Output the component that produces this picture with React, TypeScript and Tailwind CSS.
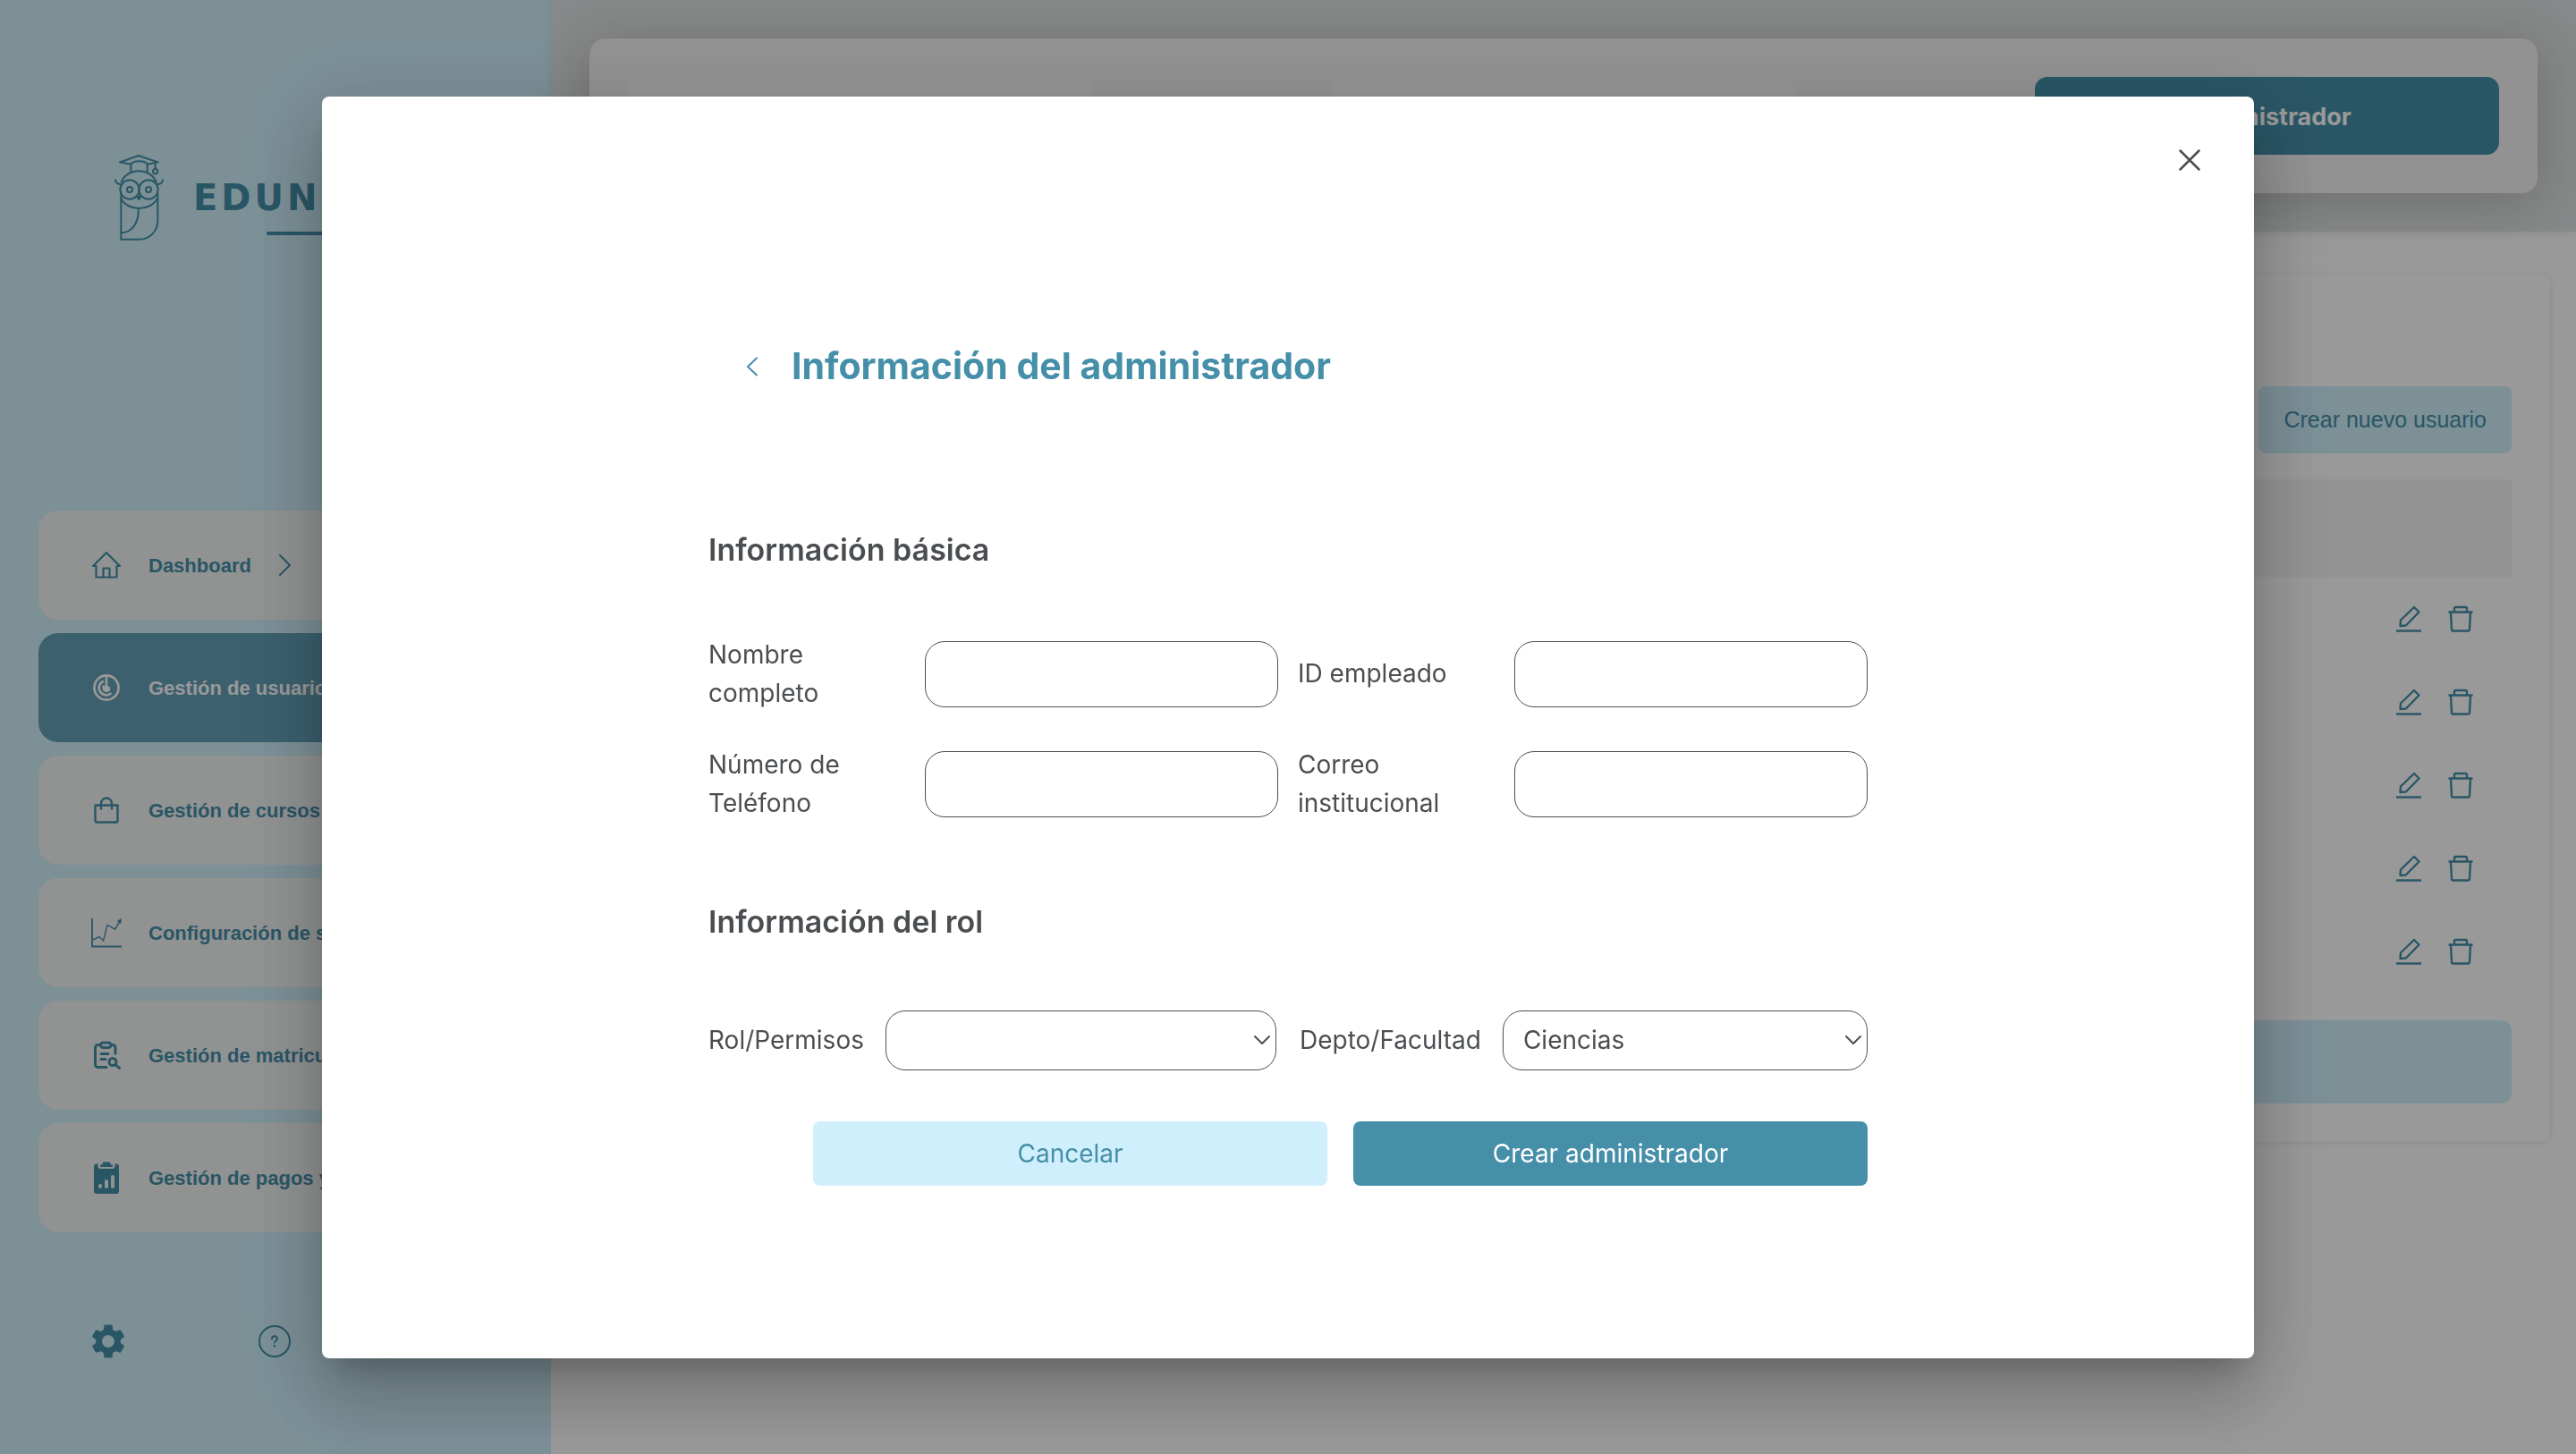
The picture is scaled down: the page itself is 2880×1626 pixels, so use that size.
import type { ReactNode } from "react";
import { MdSettings } from "react-icons/md";

function HomeIcon() {
  return (
    <svg viewBox="0 0 34 34" className="size-[34px]" fill="none" stroke="currentColor" strokeWidth="2.200" strokeLinejoin="round" strokeLinecap="round">
      <path d="M5.500 18H2L17 3l15 15h-3.500v12.500h-23z" />
      <path d="M13.500 30.500v-10H20.500v10" />
    </svg>
  );
}

function UsersIcon() {
  return (
    <svg viewBox="0 0 34 34" className="size-[34px]" fill="none" stroke="currentColor" strokeWidth="2.600" strokeLinecap="round">
      <circle cx="17" cy="17" r="13.600" />
      <path d="M17 4v14" />
      <path d="M13 10.200a8 8 0 1 0 8.500 13.500" />
      <path d="M14 15.500a3.500 3.500 0 0 0 3 5.200c2 0 3-1.500 3-3" />
      <circle cx="17.300" cy="18" r="1.800" fill="currentColor" />
    </svg>
  );
}

function BagIcon() {
  return (
    <svg viewBox="0 0 34 34" className="size-[34px]" fill="none" stroke="currentColor" strokeWidth="2.400" strokeLinejoin="round" strokeLinecap="round">
      <path d="M4.500 11.500h25v17a2 2 0 0 1-2 2h-21a2 2 0 0 1-2-2z" />
      <path d="M11 15.500V9.500a6 6 0 0 1 12 0v6" />
    </svg>
  );
}

function ChartIcon() {
  return (
    <svg viewBox="0 0 34 34" className="size-[34px]" fill="none" stroke="currentColor" strokeWidth="1.800">
      <path d="M1 1v31.500h33" />
      <path strokeWidth="1.400" d="M2 25l7-3.500 4.500 4.500L18 8.500l8.500 4.500L32 4.500" />
      <path d="M33.500 1.500l-.5 5-3.800-2.500z" fill="currentColor" strokeWidth="0.600" />
    </svg>
  );
}

function ClipboardSearchIcon() {
  return (
    <svg viewBox="0 0 34 34" className="size-[34px]" fill="none" stroke="currentColor" strokeWidth="3" strokeLinecap="round" strokeLinejoin="round">
      <path d="M10.500 5.500H7.500a3 3 0 0 0-3 3v19a3 3 0 0 0 3 3H17" />
      <path d="M22.500 5.500h1.500a3 3 0 0 1 3 3V15" />
      <rect x="10.500" y="3" width="11.500" height="5.500" rx="2.700" />
      <path d="M11 15.500h8M11 21.500h5" />
      <circle cx="24" cy="24.500" r="4" />
      <path d="M27 27.500l4.500 4" />
    </svg>
  );
}

function ClipboardStatsIcon() {
  return (
    <svg viewBox="0 0 34 38" className="h-[38px] w-[34px]" fill="currentColor">
      <path d="M5 3.500h2.500V6a3 3 0 0 0 3 3h13a3 3 0 0 0 3-3V3.500H28a3 3 0 0 1 3 3V34a3 3 0 0 1-3 3H6a3 3 0 0 1-3-3V6.500a3 3 0 0 1 3-3z" />
      <path d="M10 4.500h2.500V3a1.500 1.500 0 0 1 1.500-1.500h6A1.500 1.500 0 0 1 21.500 3v1.500H24V6a1 1 0 0 1-1 1H11a1 1 0 0 1-1-1z" />
      <g className="stroke-[#f3f3f3]" strokeWidth="4" strokeLinecap="round">
        <path d="M10 28v1" />
        <path d="M17 23v6" />
        <path d="M24 18v11" />
      </g>
    </svg>
  );
}

function QuestionIcon() {
  return (
    <svg viewBox="0 0 38 38" className="size-[38px]" fill="none" stroke="currentColor" strokeWidth="2" strokeLinecap="round">
      <circle cx="19" cy="19" r="17" />
      <path d="M16 16.200c0-3.800 6-3.800 6-.2 0 2.200-3 2.300-3 4.500" />
      <path d="M19 24v.2" strokeWidth="2.400" />
    </svg>
  );
}

function OwlLogo() {
  return (
    <svg viewBox="380 155 171 294" className="h-[98px] w-[57px]" fill="none" stroke="currentColor" strokeWidth="6" strokeLinecap="round" strokeLinejoin="round">
      <path d="M401 183l63-22 65 22-35 7c-10-14-48-14-56 0z" />
      <path d="M438 190v27M493 190v27M520 186v20" />
      <circle cx="520" cy="214" r="8" />
      <path d="M406 250c18-50 99-50 117 0" />
      <path d="M386 243c2 10 10 14 18 14M545 243c-2 10-10 14-18 14" />
      <circle cx="434" cy="275" r="32" />
      <circle cx="497" cy="275" r="32" />
      <circle cx="434" cy="275" r="9" />
      <circle cx="497" cy="275" r="9" />
      <path d="M459 298l6 10 6-10z" fill="currentColor" />
      <path d="M405 305c22 44 98 44 122 0" />
      <path d="M405 285v157h62c34 0 61-28 61-62v-95" />
      <path d="M463 340c2 42-18 80-58 80" />
    </svg>
  );
}

function EditIcon() {
  return (
    <svg viewBox="0 0 30 30" className="size-[30px]" fill="none" stroke="currentColor" strokeWidth="2.400" strokeLinejoin="round">
      <path d="M21 2l5.500 5.500L11.800 22.500l-6.300.5.500-6.500z" />
      <path d="M1 28.500h28" />
    </svg>
  );
}

function TrashIcon() {
  return (
    <svg viewBox="0 0 30 30" className="size-[30px]" fill="none" stroke="currentColor" strokeWidth="2.400" strokeLinejoin="round">
      <path d="M1.500 7.500h27M8 7.500v-4A1.500 1.500 0 0 1 9.500 2h11A1.500 1.500 0 0 1 22 3.500v4" />
      <path d="M4 7.500l1 19.500a1.500 1.500 0 0 0 1.500 1.500h17A1.500 1.500 0 0 0 25 27L26 7.500" />
    </svg>
  );
}

function ChevronIcon({ d, className }: { d: string; className: string }) {
  return (
    <svg viewBox="0 0 24 24" className={className} fill="none" stroke="currentColor" strokeWidth="2" strokeLinecap="round" strokeLinejoin="round">
      <path d={d} />
    </svg>
  );
}

const navItems: { label: string; icon: ReactNode; active?: boolean; arrow?: boolean }[] = [
  { label: "Dashboard", icon: <HomeIcon />, arrow: true },
  { label: "Gestión de usuarios", icon: <UsersIcon />, active: true },
  { label: "Gestión de cursos", icon: <BagIcon /> },
  { label: "Configuración de s", icon: <ChartIcon /> },
  { label: "Gestión de matricu", icon: <ClipboardSearchIcon /> },
  { label: "Gestión de pagos y", icon: <ClipboardStatsIcon /> },
];

function Sidebar() {
  return (
    <aside className="w-[616px] shrink-0 bg-[#cff0fb] px-[43px] pt-[172px] font-['Liberation_Sans',sans-serif] text-[#458fa9]">
      <div className="flex h-[98px] gap-8 pl-[84px]">
        <OwlLogo />
        <div className="flex flex-col pt-[25px]">
          <span className="font-['DejaVu_Sans',sans-serif] text-[40px] leading-[48px] font-bold tracking-widest">EDUN</span>
          <span className="mt-3.5 ml-[82px] h-1 w-20 rounded-full bg-[#458fa9]" />
        </div>
      </div>
      <nav className="mt-[301px] flex flex-col gap-[15px]">
        {navItems.map((item) => (
          <a
            key={item.label}
            href="#"
            className={
              item.active
                ? "flex h-[122px] items-center rounded-[22px] bg-[#64a0b8] pl-[59px] text-white"
                : "flex h-[122px] items-center rounded-[22px] bg-[#f2f4f4] pl-[59px]"
            }
          >
            {item.icon}
            <span className="ml-[30px] text-[22px] font-bold whitespace-nowrap">{item.label}</span>
            {item.arrow && <ChevronIcon d="M8 1l11 11L8 23" className="ml-6 size-6" />}
          </a>
        ))}
      </nav>
      <div className="mt-[99px] flex items-center gap-[144px] pl-[55px]">
        <button type="button" aria-label="Configuración">
          <MdSettings className="size-[46px]" />
        </button>
        <button type="button" aria-label="Ayuda">
          <QuestionIcon />
        </button>
      </div>
    </aside>
  );
}

function Page() {
  return (
    <div className="flex min-h-screen bg-white">
      <Sidebar />
      <main className="min-w-0 flex-1">
        <header className="bg-[#e0e3e4] px-[43px] py-[43px] shadow-[0_2px_8px_rgba(0,0,0,0.08)]">
          <div className="flex justify-between rounded-[18px] bg-[#f3f3f3] p-[43px] shadow-[0_8px_60px_rgba(0,0,0,0.2)]">
            <input aria-label="Buscar" className="h-[87px] w-[24.800%] rounded-[14px] bg-[#f7f7f7]" />
            <input aria-label="Filtrar" className="h-[87px] w-[24.800%] rounded-[14px] bg-[#f7f7f7]" />
            <button type="button" className="h-[87px] w-[24.800%] rounded-[14px] bg-[#458fa9] pt-1 text-[27px] font-bold text-white">
              Administrador
            </button>
          </div>
        </header>
        <section className="mr-[29px] ml-[43px] mt-[47px] rounded-xl bg-white p-[43px] pt-[126px] shadow-[0_1px_6px_rgba(0,0,0,0.1)]">
          <div className="flex justify-end">
            <button type="button" className="h-[75px] rounded-lg bg-[#cff0fb] px-7 font-['Liberation_Sans',sans-serif] text-[25px] text-[#458fa9]">
              Crear nuevo usuario
            </button>
          </div>
          <table className="mt-[29px] w-full border-collapse">
            <thead>
              <tr className="h-[109px] bg-[#f5f5f5]">
                <th aria-label="Acciones" />
              </tr>
            </thead>
            <tbody>
              {[1, 2, 3, 4, 5].map((row) => (
                <tr key={row} className="h-[93px]">
                  <td className="pr-[42px] text-[#458fa9]">
                    <div className="flex justify-end gap-7">
                      <button type="button" aria-label="Editar">
                        <EditIcon />
                      </button>
                      <button type="button" aria-label="Eliminar">
                        <TrashIcon />
                      </button>
                    </div>
                  </td>
                </tr>
              ))}
            </tbody>
          </table>
          <div className="mt-[31px] h-[93px] rounded-xl bg-[#cff0fb]" />
        </section>
      </main>
    </div>
  );
}

function Field({ id, label }: { id: string; label: string }) {
  return (
    <div className="flex h-[86px] items-center">
      <label htmlFor={id} className="w-[38%] pr-16 leading-[43px]">
        {label}
      </label>
      <input id={id} className="h-[74px] w-[62%] rounded-[22px] border border-[#4b4e51] bg-white px-5" />
    </div>
  );
}

function SelectField({ id, label, options }: { id: string; label: string; options: string[] }) {
  return (
    <div className="flex w-[49%] items-center gap-6">
      <label htmlFor={id}>{label}</label>
      <div className="relative min-w-0 flex-1">
        <select id={id} className="h-[67px] w-full appearance-none rounded-[22px] border border-[#4b4e51] bg-white px-[22px]">
          {options.map((option) => (
            <option key={option}>{option}</option>
          ))}
        </select>
        <ChevronIcon d="M4 8l8 8 8-8" className="pointer-events-none absolute top-1/2 right-1 size-6 -translate-y-1/2" />
      </div>
    </div>
  );
}

function AdminDialog() {
  return (
    <div className="fixed inset-0 flex items-center justify-center bg-black/40">
      <div
        role="dialog"
        aria-modal="true"
        aria-labelledby="dialog-title"
        className="relative flex w-3/4 flex-col items-center rounded-lg bg-white pt-[270px] pb-[193px] text-[28px] text-[#4b4e51] shadow-[0_22px_30px_-14px_rgba(0,0,0,0.2),0_48px_76px_6px_rgba(0,0,0,0.14),0_18px_92px_16px_rgba(0,0,0,0.12)]"
      >
        <button type="button" aria-label="Cerrar" className="absolute top-[56px] right-[57px]">
          <svg viewBox="0 0 30 30" className="size-[30px]" fill="none" stroke="currentColor" strokeWidth="2.500" strokeLinecap="round">
            <path d="M4.500 4.500l21 21M25.500 4.500l-21 21" />
          </svg>
        </button>
        <form className="w-[60%]">
          <div className="flex h-16 items-center gap-8 pl-[37px] text-[#458fa9]">
            <button type="button" aria-label="Volver">
              <ChevronIcon d="M17 2.500L7 12l10 9.500" className="size-6" />
            </button>
            <h1 id="dialog-title" className="text-[41px] font-bold">
              Información del administrador
            </h1>
          </div>
          <h2 className="mt-[149px] text-[34px] leading-[48px] font-semibold">Información básica</h2>
          <div className="mt-[72px] grid grid-cols-2 gap-x-[22px] gap-y-[37px]">
            <Field id="nombre" label="Nombre completo" />
            <Field id="empleado" label="ID empleado" />
            <Field id="telefono" label="Número de Teléfono" />
            <Field id="correo" label="Correo institucional" />
          </div>
          <h2 className="mt-[87px] text-[34px] leading-[48px] font-semibold">Información del rol</h2>
          <div className="mt-[75px] flex justify-between">
            <SelectField id="rol" label="Rol/Permisos" options={[""]} />
            <SelectField id="depto" label="Depto/Facultad" options={["Ciencias"]} />
          </div>
          <div className="mt-[57px] flex justify-end gap-[29px] pl-[117px]">
            <button type="button" className="h-[72px] flex-1 rounded-lg bg-[#cfeffc] text-[#458fa9]">
              Cancelar
            </button>
            <button type="submit" className="h-[72px] flex-1 rounded-lg bg-[#458fa9] text-white">
              Crear administrador
            </button>
          </div>
        </form>
      </div>
    </div>
  );
}

export default function App() {
  return (
    <div className="font-['Inter',sans-serif]">
      <Page />
      <AdminDialog />
    </div>
  );
}
